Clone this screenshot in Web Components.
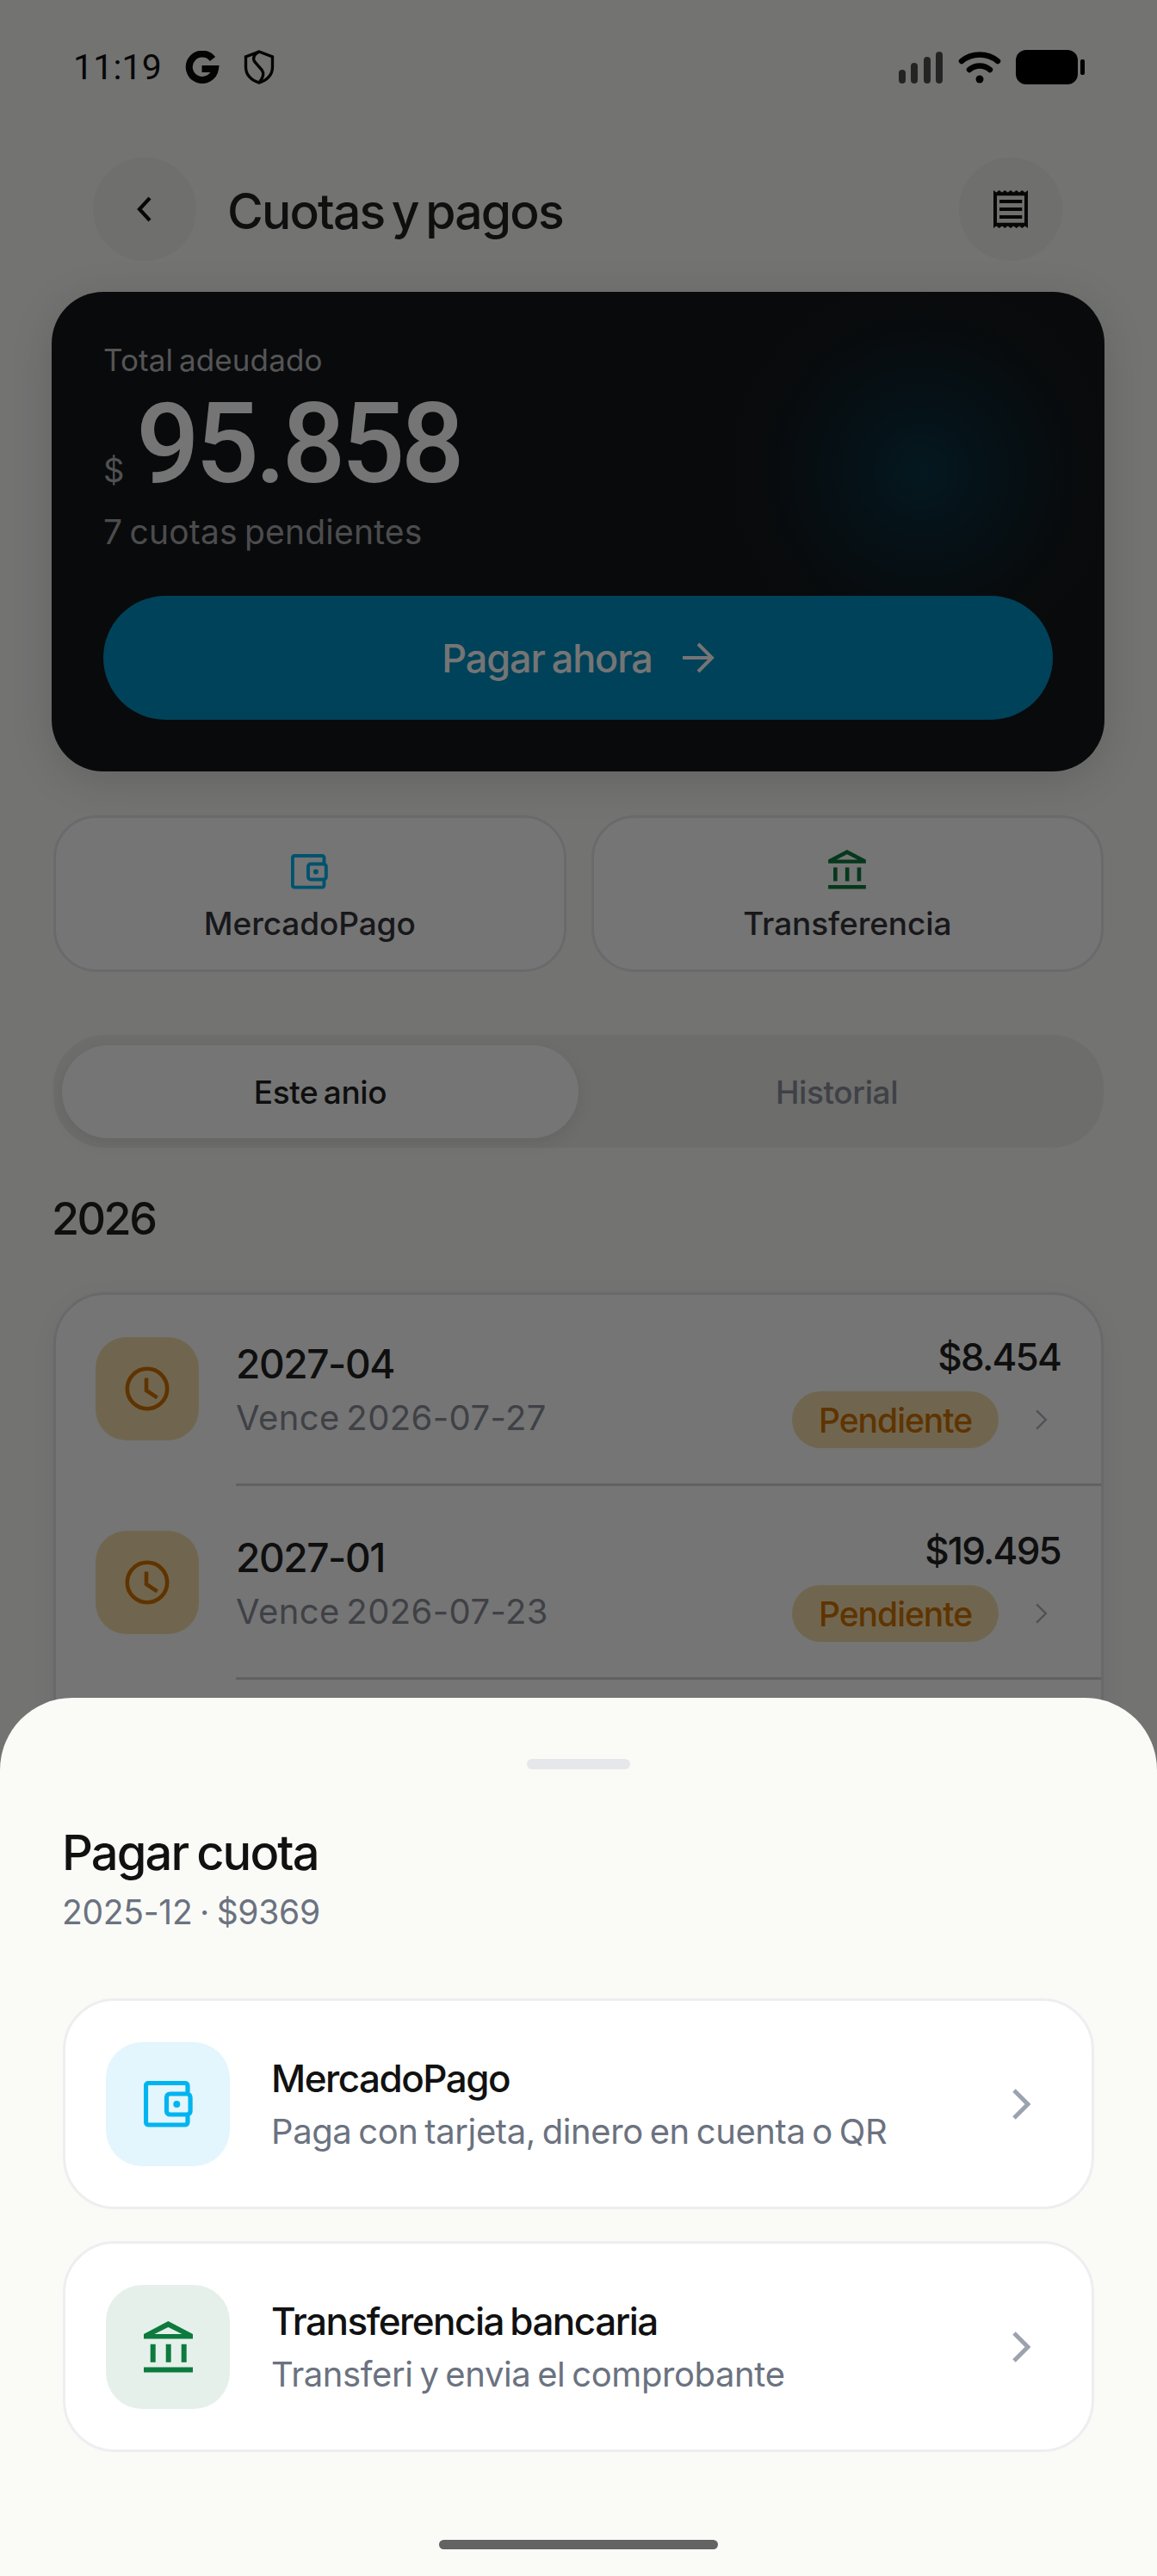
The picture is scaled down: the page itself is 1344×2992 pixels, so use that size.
<!DOCTYPE html>
<html lang="es">
<head>
<meta charset="utf-8">
<title>Cuotas y pagos</title>
<style>
  html, body { margin: 0; padding: 0; }
  body { width: 1344px; height: 2992px; overflow: hidden; background: #fafaf8; font-family: Inter, "Liberation Sans", sans-serif; color: #222; }
  app-pantalla { display: block; }
</style>
</head>
<body>
<app-pantalla>
  <barra-estado></barra-estado>
  <cabecera-pagina titulo="Cuotas y pagos"></cabecera-pagina>
  <tarjeta-total></tarjeta-total>
  <fila-metodos></fila-metodos>
  <selector-tabs></selector-tabs>
  <titulo-anio>2026</titulo-anio>
  <lista-cuotas>
    <fila-cuota periodo="2027-04" vence="Vence 2026-07-27" monto="$8.454"></fila-cuota>
    <fila-cuota periodo="2027-01" vence="Vence 2026-07-23" monto="$19.495"></fila-cuota>
  </lista-cuotas>
  <hoja-inferior titulo="Pagar cuota" detalle="2025-12 · $9369">
    <opcion-pago icono="billetera" titulo="MercadoPago" detalle="Paga con tarjeta, dinero en cuenta o QR"></opcion-pago>
    <opcion-pago icono="banco" titulo="Transferencia bancaria" detalle="Transferi y envia el comprobante"></opcion-pago>
  </hoja-inferior>
</app-pantalla>

<script>
// --- ICONOS ---
const iconoBilletera = (ancho, alto, color) => `
  <svg width="${ancho}" height="${alto}" viewBox="0 0 57 54" fill="none" stroke="${color}" stroke-width="5.2">
    <path d="M51 13V5.5a3 3 0 0 0-3-3H5.5a3 3 0 0 0-3 3V48a3 3 0 0 0 3 3H48a3 3 0 0 0 3-3v-7"/>
    <rect x="26.5" y="15" width="27.6" height="24" rx="4"/>
    <circle cx="38.3" cy="27" r="4" fill="${color}" stroke="none"/>
  </svg>`;

const iconoBanco = (ancho, alto, color) => `
  <svg width="${ancho}" height="${alto}" viewBox="0 0 57 60" fill="${color}">
    <path fill-rule="evenodd" d="M28.4 0 57 15v5.4H0V15zM28.4 7 12.4 15h32z"/>
    <path d="M7.7 26.7h6v21h-6zM25.7 26.7h6v21h-6zM43.7 26.7h6v21h-6zM0 53.4h57v6H0z"/>
  </svg>`;

const iconoReloj = `
  <svg width="52" height="52" viewBox="0 0 52 52" fill="none" stroke="#cf7100" stroke-width="4.6">
    <circle cx="26" cy="26" r="23.2"/>
    <path d="M25 13.5V28l12.6 8.4"/>
  </svg>`;

const flechaDerecha = (ancho, alto, color, grosor) => `
  <svg width="${ancho}" height="${alto}" viewBox="0 0 22 36" fill="none" stroke="${color}" stroke-width="${grosor}">
    <path d="M3 2l16 16L3 34"/>
  </svg>`;

// --- BARRA DE ESTADO ---
class BarraEstado extends HTMLElement {
  connectedCallback() {
    this.attachShadow({ mode: 'open' }).innerHTML = `
      <style>
        :host { display: flex; align-items: center; height: 156px; padding: 0 84px 0 85px; box-sizing: border-box; color: #111; }
        .hora { font: 400 41px/1 Roboto, sans-serif; width: 129px; letter-spacing: .2px; }
        .g { margin-right: 28px; }
        .der { margin-left: auto; display: flex; align-items: center; gap: 17px; }
      </style>
      <span class="hora">11:19</span>
      <svg class="g" width="41" height="38" viewBox="0 0 41 38" fill="none" stroke="#0a0a0a" stroke-width="8">
        <path d="M33 9.5A15.2 15.2 0 1 0 36 21H20.5"/>
      </svg>
      <svg width="36" height="40" viewBox="0 0 36 40" fill="none" stroke="#0a0a0a" stroke-width="3.4">
        <path d="M18 2 33.5 8v12c0 9-6.5 15.5-15.5 18C9 35.500 2.500 29 2.500 20V8z"/>
        <path d="M18 2c-6 3-8 8-5 12l8 9c3 4 2 9-3 15"/>
      </svg>
      <div class="der">
        <svg width="52" height="37" viewBox="0 0 52 37" fill="#505050">
          <rect x="0" y="21" width="8" height="16" rx="4"/>
          <rect x="14" y="13" width="8" height="24" rx="4"/>
          <rect x="29" y="6" width="8" height="31" rx="4"/>
          <rect x="43" y="0" width="8" height="37" rx="4"/>
        </svg>
        <svg width="50" height="37" viewBox="0 0 50 37" fill="none" stroke="#050505" stroke-width="6.500" stroke-linecap="round">
          <path d="M4 11C16 1 34 1 46 11"/>
          <path d="M13 21C20 15 30 15 37 21"/>
          <circle cx="25" cy="32" r="4.500" fill="#050505" stroke="none"/>
        </svg>
        <svg width="80" height="40" viewBox="0 0 80 40" fill="#000">
          <rect x="0" y="0" width="72" height="40" rx="12"/>
          <rect x="75" y="11" width="5" height="18" rx="2"/>
        </svg>
      </div>`;
  }
}

// --- CABECERA ---
class CabeceraPagina extends HTMLElement {
  connectedCallback() {
    this.attachShadow({ mode: 'open' }).innerHTML = `
      <style>
        :host { display: flex; align-items: center; padding: 27px 110px 0 108px; height: 120px; color: #222; }
        .circulo { width: 120px; height: 120px; border-radius: 50%; background: #f1f1ef; display: flex; align-items: center; justify-content: center; flex: none; }
        h1 { margin: 0 0 0 36px; font-size: 57px; font-weight: 500; letter-spacing: -1.800px; word-spacing: -5px; flex: 1; padding-top: 4px; }
      </style>
      <div class="circulo">
        <svg width="18" height="32" viewBox="0 0 18 32" fill="none" stroke="#111" stroke-width="4.200"><path d="M15 3 3 16l12 13"/></svg>
      </div>
      <h1>${this.getAttribute('titulo')}</h1>
      <div class="circulo">
        <svg width="40" height="44" viewBox="0 0 40 44" fill="#111">
          <path fill-rule="evenodd" d="M0 0l3.300 2.500L6.700 0 10 2.500 13.300 0l3.400 2.500L20 0l3.300 2.500L26.700 0 30 2.500 33.300 0l3.400 2.500L40 0v44l-3.300-2.500L33.300 44 30 41.500 26.700 44l-3.400-2.500L20 44l-3.300-2.500L13.300 44 10 41.500 6.700 44l-3.400-2.500L0 44zM4 6.300v31.400h32V6.300z"/>
          <path d="M7 11h26.300v4H7zM7 20h26.300v4H7zM7 29h26.300v4H7z"/>
        </svg>
      </div>`;
  }
}

// --- TARJETA TOTAL ---
class TarjetaTotal extends HTMLElement {
  connectedCallback() {
    this.attachShadow({ mode: 'open' }).innerHTML = `
      <style>
        :host { display: flex; flex-direction: column; margin: 36px 61px 0 60px; height: 557px; box-sizing: border-box; padding: 57px 60px 60px; border-radius: 60px; color: #fff;
                background: radial-gradient(circle 225px at 1011px 209px, #0a3546 0%, #0d2530 40%, #13191d 78%, #15171b 100%) #15171b;
                box-shadow: 0 10px 50px rgba(0,0,0,.14); }
        .etiqueta { font-size: 35px; line-height: 44px; color: #b9b9bb; letter-spacing: .1px; word-spacing: -3px; }
        .monto { display: flex; align-items: baseline; height: 96px; margin-top: 28px; }
        .signo { font-size: 38px; line-height: 40px; color: #b0b0b2; width: 38px; }
        .cifra { display: block; font-family: Roboto, sans-serif; font-size: 130px; line-height: 96px; font-weight: 500; letter-spacing: -4.800px; }
        .pendientes { font-size: 39px; line-height: 50px; color: #a6a6a8; letter-spacing: .2px; word-spacing: -3px; margin-top: 29px; }
        .boton { margin-top: auto; height: 144px; border-radius: 72px; background: #0090c2; display: flex; align-items: center; justify-content: center; gap: 34px; font-size: 45px; font-weight: 500; letter-spacing: -1.100px; word-spacing: -3px; }
      </style>
      <div class="etiqueta">Total adeudado</div>
      <div class="monto"><span class="signo">$</span><span class="cifra">95.858</span></div>
      <div class="pendientes">7 cuotas pendientes</div>
      <div class="boton">
        <span>Pagar ahora</span>
        <svg width="38" height="38" viewBox="0 0 38 38" fill="none" stroke="#fff" stroke-width="4"><path d="M1 19h34M19 3l16 16-16 16"/></svg>
      </div>`;
  }
}

// --- ACCESOS A METODOS ---
class FilaMetodos extends HTMLElement {
  connectedCallback() {
    this.attachShadow({ mode: 'open' }).innerHTML = `
      <style>
        :host { display: grid; grid-template-columns: 1fr 1fr; gap: 29px; margin: 51px 62px 0; }
        .tile { height: 182px; box-sizing: border-box; background: #fff; border: 3px solid #e6e6eb; border-radius: 50px; display: flex; flex-direction: column; align-items: center; padding-top: 37px; color: #35353c; }
        .ico { height: 46px; display: flex; align-items: flex-end; }
        span { font-size: 37px; font-weight: 500; line-height: 48px; margin-top: 16px; letter-spacing: -.1px; }
      </style>
      <div class="tile"><div class="ico">${iconoBilletera(43, 41, '#00b4f0')}</div><span>MercadoPago</span></div>
      <div class="tile"><div class="ico">${iconoBanco(44, 46, '#0d7a3e')}</div><span>Transferencia</span></div>`;
  }
}

// --- TABS ---
class SelectorTabs extends HTMLElement {
  connectedCallback() {
    this.attachShadow({ mode: 'open' }).innerHTML = `
      <style>
        :host { display: grid; grid-template-columns: 600px 1fr; margin: 73px 62px 0; height: 131px; box-sizing: border-box; padding: 12px 0 11px 10px; border-radius: 60px; background: #edede9; font-size: 37px; font-weight: 500; letter-spacing: -.4px; word-spacing: -3px; }
        div { display: flex; align-items: center; justify-content: center; border-radius: 54px; }
        .activa { background: #fff; color: #1f1f1f; box-shadow: 0 6px 18px rgba(0,0,0,.08); }
        .otra { color: #8a8e9a; padding-right: 10px; }
      </style>
      <div class="activa">Este anio</div>
      <div class="otra">Historial</div>`;
  }
}

class TituloAnio extends HTMLElement {
  connectedCallback() {
    this.attachShadow({ mode: 'open' }).innerHTML = `
      <style>
        :host { display: block; margin: 53px 60px 0; height: 60px; font-size: 52px; line-height: 60px; font-weight: 500; letter-spacing: -2.500px; color: #222; }
      </style>
      <slot></slot>`;
  }
}

// --- LISTA DE CUOTAS ---
class ListaCuotas extends HTMLElement {
  connectedCallback() {
    this.attachShadow({ mode: 'open' }).innerHTML = `
      <style>
        :host { display: block; margin: 55px 62px 0; border: 3px solid #e4e4e9; border-radius: 60px; background: #fff; padding-bottom: 300px; box-shadow: 0 8px 30px rgba(0,0,0,.05); }
      </style>
      <slot></slot>`;
  }
}

class FilaCuota extends HTMLElement {
  connectedCallback() {
    this.attachShadow({ mode: 'open' }).innerHTML = `
      <style>
        :host { display: flex; align-items: flex-start; height: 225px; box-sizing: border-box; padding: 49px 0 0 46px; color: #222; position: relative; }
        .ico { width: 120px; height: 120px; border-radius: 36px; background: #f3deac; display: flex; align-items: center; justify-content: center; flex: none; margin-right: 43px; }
        .txt { flex: 1; border-bottom: 3px solid #d4d4d9; height: 173px; box-sizing: border-box; display: flex; justify-content: space-between; padding-right: 47px; }
        .periodo { font-size: 46px; font-weight: 500; line-height: 60px; margin-top: 1px; letter-spacing: -1.400px; }
        .vence { font-size: 40px; line-height: 50px; margin-top: 8px; color: #8a8e9a; letter-spacing: .4px; word-spacing: -4px; }
        .der { display: flex; flex-direction: column; align-items: flex-end; }
        .monto { font-size: 44px; font-weight: 500; line-height: 50px; margin-top: -2px; letter-spacing: -1.800px; }
        .linea { display: flex; align-items: center; margin-top: 15px; margin-right: 15px; gap: 42px; }
        .chip { height: 66px; width: 240px; border-radius: 33px; background: #f3deac; color: #cf7100; font-size: 39px; font-weight: 500; letter-spacing: -1px; display: flex; align-items: center; justify-content: center; }
      </style>
      <div class="ico">${iconoReloj}</div>
      <div class="txt">
        <div>
          <div class="periodo">${this.getAttribute('periodo')}</div>
          <div class="vence">${this.getAttribute('vence')}</div>
        </div>
        <div class="der">
          <div class="monto">${this.getAttribute('monto')}</div>
          <div class="linea"><div class="chip">Pendiente</div>${flechaDerecha(15, 24, '#abb0bb', 3.500)}</div>
        </div>
      </div>`;
  }
}

// --- HOJA INFERIOR ---
class HojaInferior extends HTMLElement {
  connectedCallback() {
    this.attachShadow({ mode: 'open' }).innerHTML = `
      <style>
        :host { display: block; position: absolute; inset: 0; background: rgba(0,0,0,.54); overflow: hidden; }
        .panel { position: absolute; left: 0; right: 0; bottom: 0; height: 1020px; box-sizing: border-box; background: #fafbf7; border-radius: 84px 84px 0 0; padding: 71px 73px 0 73px; display: flex; flex-direction: column; }
        .asa { width: 120px; height: 12px; border-radius: 6px; background: #e5e7eb; align-self: center; flex: none; }
        h2 { margin: 63px 0 0 -1px; font-size: 56px; line-height: 68px; font-weight: 500; letter-spacing: -1.900px; word-spacing: -3px; color: #111; }
        p { margin: 10px 0 0 -1px; font-size: 39px; line-height: 50px; color: #6b7280; letter-spacing: -.3px; word-spacing: -2px; }
        .opciones { margin-top: 75px; display: flex; flex-direction: column; gap: 37px; }
        .home { position: absolute; left: 510px; bottom: 31px; width: 324px; height: 11px; border-radius: 6px; background: #636363; }
      </style>
      <div class="panel">
        <div class="asa"></div>
        <h2>${this.getAttribute('titulo')}</h2>
        <p>${this.getAttribute('detalle')}</p>
        <div class="opciones"><slot></slot></div>
        <div class="home"></div>
      </div>`;
  }
}

class OpcionPago extends HTMLElement {
  connectedCallback() {
    const esBanco = this.getAttribute('icono') === 'banco';
    const icono = esBanco ? iconoBanco(57, 60, '#0d7a3e') : iconoBilletera(57, 54, '#00b4f0');
    this.attachShadow({ mode: 'open' }).innerHTML = `
      <style>
        :host { display: flex; align-items: center; height: 245px; box-sizing: border-box; background: #fff; border: 3px solid #eeeef1; border-radius: 60px; padding: 0 71px 0 47px; }
        .ico { width: 144px; height: 144px; border-radius: 42px; display: flex; align-items: center; justify-content: center; flex: none; margin-right: 48px; background: ${esBanco ? '#e6f0eb' : '#e3f5fd'}; }
        .txt { flex: 1; }
        .titulo { font-size: 44px; line-height: 56px; font-weight: 500; color: #111; letter-spacing: -1.500px; word-spacing: -3px; }
        .detalle { font-size: 40px; line-height: 52px; margin-top: 8px; color: #6b7280; letter-spacing: -.4px; word-spacing: -3px; }
      </style>
      <div class="ico">${icono}</div>
      <div class="txt">
        <div class="titulo">${this.getAttribute('titulo')}</div>
        <div class="detalle">${this.getAttribute('detalle')}</div>
      </div>
      ${flechaDerecha(22, 36, '#9ca3af', 5)}`;
  }
}

class AppPantalla extends HTMLElement {
  connectedCallback() {
    this.attachShadow({ mode: 'open' }).innerHTML = `
      <style>:host { display: block; position: relative; width: 1344px; height: 2992px; overflow: hidden; }</style>
      <slot></slot>`;
  }
}

customElements.define('app-pantalla', AppPantalla);
customElements.define('barra-estado', BarraEstado);
customElements.define('cabecera-pagina', CabeceraPagina);
customElements.define('tarjeta-total', TarjetaTotal);
customElements.define('fila-metodos', FilaMetodos);
customElements.define('selector-tabs', SelectorTabs);
customElements.define('titulo-anio', TituloAnio);
customElements.define('lista-cuotas', ListaCuotas);
customElements.define('fila-cuota', FilaCuota);
customElements.define('hoja-inferior', HojaInferior);
customElements.define('opcion-pago', OpcionPago);
</script>
</body>
</html>
